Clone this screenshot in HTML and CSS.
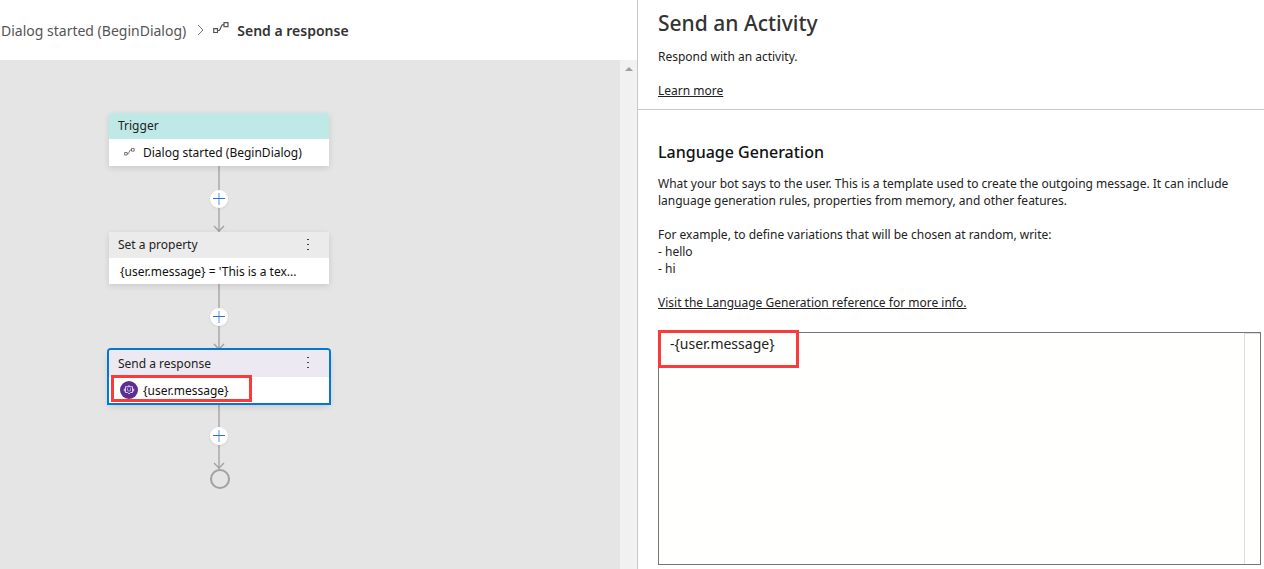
FILE: index.html
```html
<!DOCTYPE html>
<html lang="en">
<head>
<meta charset="utf-8">
<title>Send a response</title>
<link rel="stylesheet" href="styles.css">
</head>
<body>
<svg class="defs" aria-hidden="true">
  <symbol id="flow" viewBox="0 0 16 12">
    <path d="M.7 6.7h3.8v3.8H.7zM11 .7h4v4h-4zM4.500 8.500h1.200c.9 0 1.100-.6 1.500-1.600l1.300-3c.4-.9.8-1.200 1.500-1.200h1" fill="none" stroke="currentColor" stroke-width="1.200"/>
  </symbol>
  <symbol id="dots" viewBox="0 0 4 12">
    <path d="M1 0h2v1H1zM1 5h2v1H1zM1 10h2v1H1z" fill="#444"/>
  </symbol>
  <symbol id="plus" viewBox="0 0 18 18">
    <path d="M9 3v12" stroke="#a9c9f5" stroke-width="2"/>
    <path d="M3 8.500h12" stroke="#2b6fd8"/>
  </symbol>
  <symbol id="arrow" viewBox="0 0 12 7">
    <path d="M1 1l5 5 5-5" fill="none" stroke="#a0a0a0" stroke-width="1.300"/>
  </symbol>
</svg>
<div class="app">
  <main class="editor">
    <nav class="crumbs" aria-label="Breadcrumb">
      <a class="crumb" href="#dialog">Dialog started (BeginDialog)</a>
      <svg class="chevron" viewBox="0 0 8 12"><path d="M1 1l5 5-5 5" fill="none" stroke="#777"/></svg>
      <svg class="crumb-icon"><use href="#flow"/></svg>
      <span class="current">Send a response</span>
    </nav>
    <div class="workspace">
      <div class="canvas">
        <section class="node">
          <div class="node-head trigger">Trigger</div>
          <div class="node-body"><svg class="small-icon"><use href="#flow"/></svg><span>Dialog started (BeginDialog)</span></div>
        </section>
        <div class="connector"><button class="add" aria-label="Add action"><svg><use href="#plus"/></svg></button><svg class="arrow"><use href="#arrow"/></svg></div>
        <section class="node">
          <div class="node-head property">Set a property<button class="menu" aria-label="Property menu"><svg><use href="#dots"/></svg></button></div>
          <div class="node-body"><span>{user.message} = 'This is a tex...</span></div>
        </section>
        <div class="connector"><button class="add" aria-label="Add action"><svg><use href="#plus"/></svg></button><svg class="arrow"><use href="#arrow"/></svg></div>
        <section class="node selected">
          <div class="node-head response">Send a response<button class="menu" aria-label="Response menu"><svg><use href="#dots"/></svg></button></div>
          <div class="node-body">
            <svg class="bot" viewBox="0 0 18 18"><circle cx="9" cy="9" r="9" fill="#5c2e91"/><path d="M5.500 5.700h7v5.800h-2.200L9 13l-1.300-1.500H5.500zM9 5.700V4M5.500 8h-1.200v2h1.200M12.500 8h1.200v2h-1.200" fill="none" stroke="#e4daf0" stroke-width=".9"/><path d="M7 7.500h1v1H7zM10 7.500h1v1h-1z" fill="#fff"/><path d="M7.200 9.500q1.800 1 3.600 0" fill="none" stroke="#e4daf0" stroke-width=".7"/></svg>
            <span>{user.message}</span>
          </div>
          <div class="mark mark-node"></div>
        </section>
        <div class="connector"><button class="add" aria-label="Add action"><svg><use href="#plus"/></svg></button><svg class="arrow"><use href="#arrow"/></svg></div>
        <div class="end"></div>
      </div>
      <div class="scrollbar"><svg viewBox="0 0 8 4"><path d="M0 4l4-4 4 4z" fill="#a0a0a0"/></svg></div>
    </div>
  </main>
  <aside class="panel">
    <header class="panel-head">
      <h1>Send an Activity</h1>
      <p>Respond with an activity.</p>
      <a href="#learn">Learn more</a>
    </header>
    <section class="panel-body">
      <h2><label for="template">Language Generation</label></h2>
      <p>What your bot says to the user. This is a template used to create the outgoing message. It can include language generation rules, properties from memory, and other features.</p>
      <p>For example, to define variations that will be chosen at random, write:<br>- hello<br>- hi</p>
      <a href="#reference">Visit the Language Generation reference for more info.</a>
      <div class="code">
        <textarea id="template" spellcheck="false">-{user.message}</textarea>
        <div class="ruler"></div>
        <div class="mark mark-code"></div>
      </div>
    </section>
  </aside>
</div>
</body>
</html>
```
FILE: styles.css
```css
* { box-sizing: border-box; }
body {
  margin: 0;
  background: #fff;
  color: #222;
  font: 12px/17px "Segoe UI", "Noto Sans", "Open Sans", sans-serif;
}
button { padding: 0; border: 0; background: none; }
a { color: inherit; }
svg { display: block; flex: none; }
.defs { position: absolute; width: 0; height: 0; }
.app { display: flex; min-height: 100vh; }
.editor { flex: 637; min-width: 0; display: flex; flex-direction: column; border-right: 1px solid #c8c8c8; }
.crumbs { height: 60px; display: flex; align-items: center; padding: 0 1px; font-size: 14px; color: #333; }
.crumb { color: #555; text-decoration: none; }
.chevron { width: 8px; height: 12px; margin-left: 11px; }
.crumb-icon { width: 16px; height: 12px; margin: 0 8px 4px; color: #555; }
.current { font-weight: 600; }
.workspace { flex: 1; display: flex; background: #e5e5e5; }
.canvas { flex: 1; padding: 53px 0 0 109px; }
.scrollbar { width: 17px; padding-top: 7px; background: #f1f1f1; }
.scrollbar svg { width: 8px; height: 4px; margin: 0 auto; }
.node { position: relative; width: 220px; background: #fff; border-radius: 2px 2px 0 0; box-shadow: 0 2px 6px rgba(0, 0, 0, .12); }
.selected { box-shadow: 0 0 0 2px #0078d4, 0 3px 7px rgba(0, 0, 0, .15); }
.node-head { height: 26px; padding: 0 19px 1px 9px; display: flex; align-items: center; justify-content: space-between; border-radius: 2px 2px 0 0; }
.trigger { background: #bfe9e7; }
.property { background: #ebebeb; }
.response { height: 27px; background: #ece9f2; }
.menu svg { width: 4px; height: 12px; }
.node-body { height: 26px; padding: 0 11px; display: flex; align-items: center; white-space: nowrap; color: #111; }
.trigger + .node-body { height: 27px; }
.small-icon { width: 11px; height: 8px; margin: 0 8px 2px 4px; color: #555; }
.bot { width: 18px; height: 18px; margin-right: 5px; }
.connector { width: 220px; height: 66px; display: flex; flex-direction: column; align-items: center; justify-content: space-between; padding-top: 24px; background: linear-gradient(#b8b8b8, #b8b8b8) center / 2px 100% no-repeat; }
.add { width: 18px; height: 18px; border-radius: 50%; background: #fff; box-shadow: 0 1px 3px rgba(0, 0, 0, .08); }
.add svg { width: 18px; height: 18px; }
.arrow { width: 12px; height: 7px; }
.end { width: 20px; height: 20px; margin-left: 101px; border: 2px solid #a0a0a0; border-radius: 50%; }
.mark { position: absolute; border: 3px solid #fb3a3a; pointer-events: none; }
.mark-node { left: 2px; top: 25px; width: 141px; height: 27px; }
.mark-code { left: -1px; top: -3px; width: 141px; height: 38px; }
.panel { flex: 626; min-width: 0; display: flex; flex-direction: column; }
.panel-head { padding: 8px 20px 10px; border-bottom: 1px solid #c8c8c8; }
h1 { margin: 0 0 10px; font-size: 21px; line-height: 30px; font-weight: 500; color: #333; }
p { margin: 0 0 17px; }
.panel-body { flex: 1; display: flex; flex-direction: column; align-items: flex-start; padding: 32px 3px 4px 20px; }
.panel-body p { padding-right: 10px; }
h2 { margin: 0 0 13px; font-size: 16px; line-height: 20px; font-weight: 500; color: #111; }
.code { position: relative; flex: 1; align-self: stretch; display: flex; margin-top: 21px; border: 1px solid #767676; background: #fffffe; }
textarea { flex: 1; min-width: 0; padding: 2px 11px; border: 0; outline: 0; resize: none; background: transparent; color: #222; font: inherit; font-size: 14px; line-height: 18px; }
.ruler { width: 16px; border: solid #ddd; border-width: 1px 0 0 1px; }
```
